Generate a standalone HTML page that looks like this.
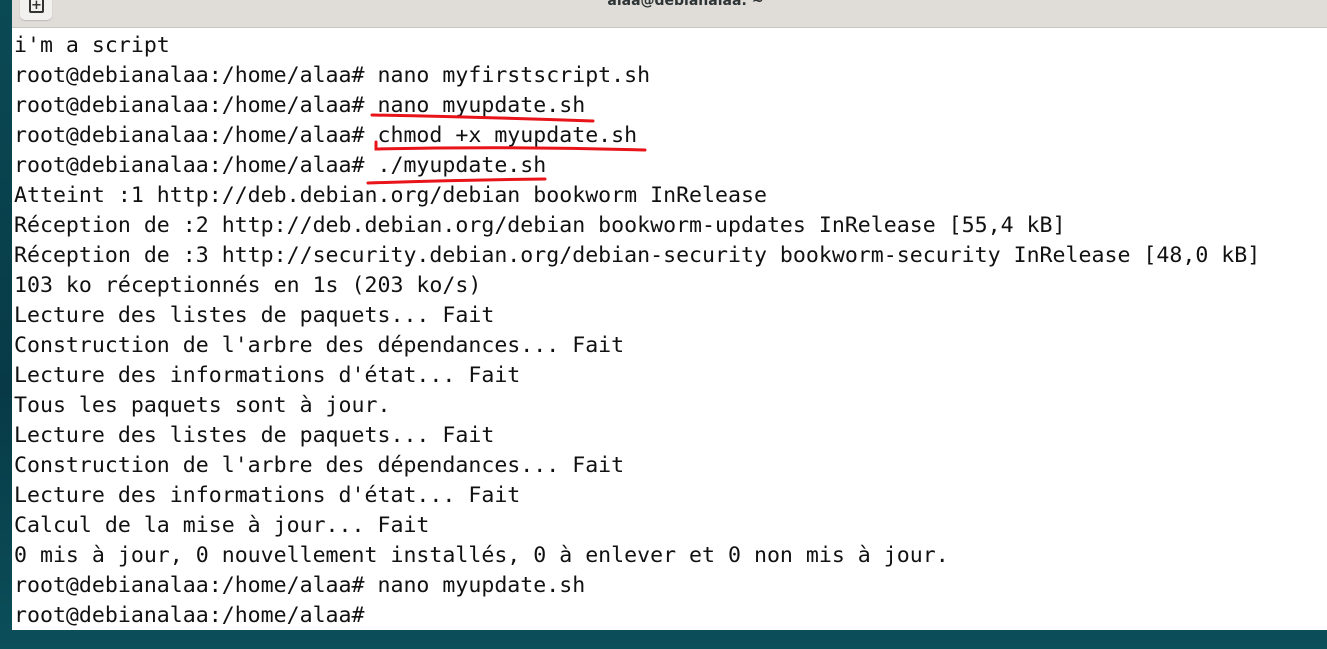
<!DOCTYPE html>
<html><head><meta charset="utf-8"><style>
html,body{margin:0;padding:0;}
body{width:1327px;height:649px;overflow:hidden;position:relative;
background:linear-gradient(180deg,#0a4a55 0%,#073a46 60%,#0b4f5a 100%);}
.win{position:absolute;left:12px;top:0;width:1315px;height:630px;background:#fff;}
.title{position:absolute;left:0;top:0;width:100%;height:27px;background:#e0ddd9;border-bottom:1px solid #c8c5c1;}
.btn{position:absolute;left:8px;top:-8px;width:32px;height:28px;background:#f2f1ef;border-radius:5px;box-shadow:0 1px 1px rgba(0,0,0,.15);}
.btn span{position:absolute;left:9px;top:6px;width:11px;height:11px;border:2px solid #333;border-radius:2px;font:bold 13px/11px "DejaVu Sans",sans-serif;text-align:center;color:#333;}
.ttl{position:absolute;left:0;width:100%;top:-7px;text-align:center;font:bold 14px "DejaVu Sans","Liberation Sans",sans-serif;color:#2e3436;padding-left:16px;}
pre{position:absolute;left:2px;top:31px;margin:0;font:21.57px/30px "DejaVu Sans Mono","Liberation Mono",monospace;color:#111;}
svg{position:absolute;left:0;top:0;}
</style></head><body>
<div class="win">
<div class="title"><div class="btn"><span>+</span></div><div class="ttl">alaa@debianalaa: ~</div></div>
<pre>i'm a script
root@debianalaa:/home/alaa# nano myfirstscript.sh
root@debianalaa:/home/alaa# nano myupdate.sh
root@debianalaa:/home/alaa# chmod +x myupdate.sh
root@debianalaa:/home/alaa# ./myupdate.sh
Atteint :1 http://deb.debian.org/debian bookworm InRelease
Réception de :2 http://deb.debian.org/debian bookworm-updates InRelease [55,4 kB]
Réception de :3 http://security.debian.org/debian-security bookworm-security InRelease [48,0 kB]
103 ko réceptionnés en 1s (203 ko/s)
Lecture des listes de paquets... Fait
Construction de l'arbre des dépendances... Fait
Lecture des informations d'état... Fait
Tous les paquets sont à jour.
Lecture des listes de paquets... Fait
Construction de l'arbre des dépendances... Fait
Lecture des informations d'état... Fait
Calcul de la mise à jour... Fait
0 mis à jour, 0 nouvellement installés, 0 à enlever et 0 non mis à jour.
root@debianalaa:/home/alaa# nano myupdate.sh
root@debianalaa:/home/alaa#</pre>
</div>
<svg width="1327" height="649">
<g fill="none" stroke="#e8141a" stroke-width="3" stroke-linecap="round">
<path d="M372 115 Q480 117 593 121"/>
<path d="M376 142 L376 149 Q510 146 645 150"/>
<path d="M368 183 Q460 180 545 179"/>
</g></svg>
</body></html>
